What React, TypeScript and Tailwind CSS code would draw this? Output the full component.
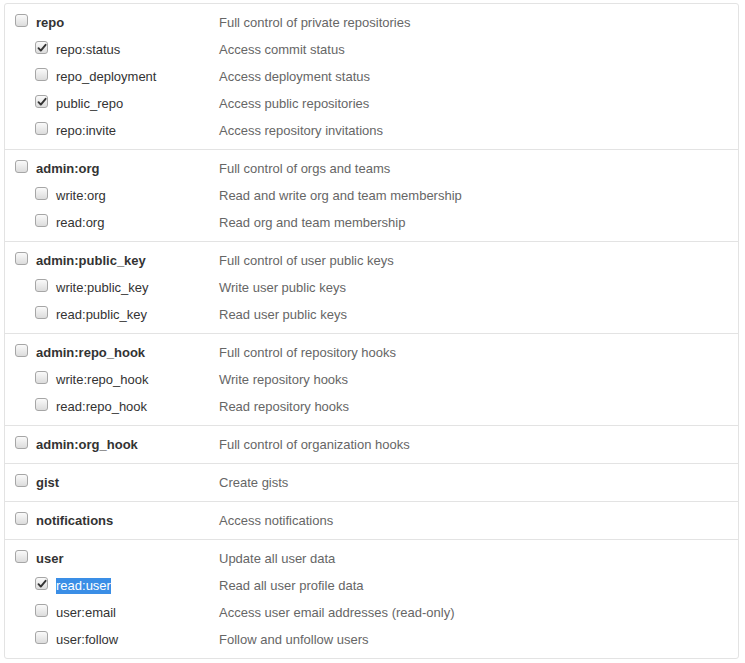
import React from 'react';

interface Scope {
  name: string;
  description: string;
  checked?: boolean;
  selected?: boolean;
}

interface ScopeGroup {
  parent: Scope;
  children: Scope[];
}

const GROUPS: ScopeGroup[] = [
  {
    parent: { name: 'repo', description: 'Full control of private repositories' },
    children: [
      { name: 'repo:status', description: 'Access commit status', checked: true },
      { name: 'repo_deployment', description: 'Access deployment status' },
      { name: 'public_repo', description: 'Access public repositories', checked: true },
      { name: 'repo:invite', description: 'Access repository invitations' },
    ],
  },
  {
    parent: { name: 'admin:org', description: 'Full control of orgs and teams' },
    children: [
      { name: 'write:org', description: 'Read and write org and team membership' },
      { name: 'read:org', description: 'Read org and team membership' },
    ],
  },
  {
    parent: { name: 'admin:public_key', description: 'Full control of user public keys' },
    children: [
      { name: 'write:public_key', description: 'Write user public keys' },
      { name: 'read:public_key', description: 'Read user public keys' },
    ],
  },
  {
    parent: { name: 'admin:repo_hook', description: 'Full control of repository hooks' },
    children: [
      { name: 'write:repo_hook', description: 'Write repository hooks' },
      { name: 'read:repo_hook', description: 'Read repository hooks' },
    ],
  },
  {
    parent: { name: 'admin:org_hook', description: 'Full control of organization hooks' },
    children: [],
  },
  {
    parent: { name: 'gist', description: 'Create gists' },
    children: [],
  },
  {
    parent: { name: 'notifications', description: 'Access notifications' },
    children: [],
  },
  {
    parent: { name: 'user', description: 'Update all user data' },
    children: [
      { name: 'read:user', description: 'Read all user profile data', checked: true, selected: true },
      { name: 'user:email', description: 'Access user email addresses (read-only)' },
      { name: 'user:follow', description: 'Follow and unfollow users' },
    ],
  },
];

const Checkbox = ({ checked }: { checked?: boolean }) => (
  <span className="relative -mt-[4px] flex h-[13px] w-[13px] shrink-0 items-center justify-center rounded-[3px] border border-[#a6a6a6] bg-gradient-to-b from-[#fafafa] to-[#dcdcdc]">
    {checked && (
      <svg width="10" height="10" viewBox="0 0 10 10" className="absolute left-[1px] top-[1px]">
        <path d="M1.5 5.2 L3.8 7.6 L8.6 1.8" fill="none" stroke="#333" strokeWidth="1.9" strokeLinecap="round" strokeLinejoin="round" />
      </svg>
    )}
  </span>
);

const ScopeRow = ({ scope, child }: { scope: Scope; child?: boolean }) => (
  <div className="flex h-[27px] items-center">
    <div className={`flex w-[214px] items-center gap-[8px] ${child ? 'pl-[30px]' : 'pl-[10px]'}`}>
      <Checkbox checked={scope.checked} />
      <span
        className={`${child ? 'text-[#333]' : 'font-bold text-[#333]'} ${
          scope.selected ? 'bg-[#3a8ee6] text-white' : ''
        } leading-[16px]`}
      >
        {scope.name}
      </span>
    </div>
    <span className="text-[#666]">{scope.description}</span>
  </div>
);

export default function App() {
  return (
    <div className="min-h-screen bg-white pl-[4px] pt-[3px] font-['Liberation_Sans',Arial,sans-serif] text-[13px]">
      <div className="w-[735px] rounded-[3px] border border-[#e3e3e3]">
        {GROUPS.map(({ parent, children }, i) => (
          <div key={parent.name} className={`pt-[5px] pb-[5px] ${i > 0 ? 'border-t border-[#e3e3e3]' : ''}`}>
            <ScopeRow scope={parent} />
            {children.map((c) => (
              <ScopeRow key={c.name} scope={c} child />
            ))}
          </div>
        ))}
      </div>
    </div>
  );
}
